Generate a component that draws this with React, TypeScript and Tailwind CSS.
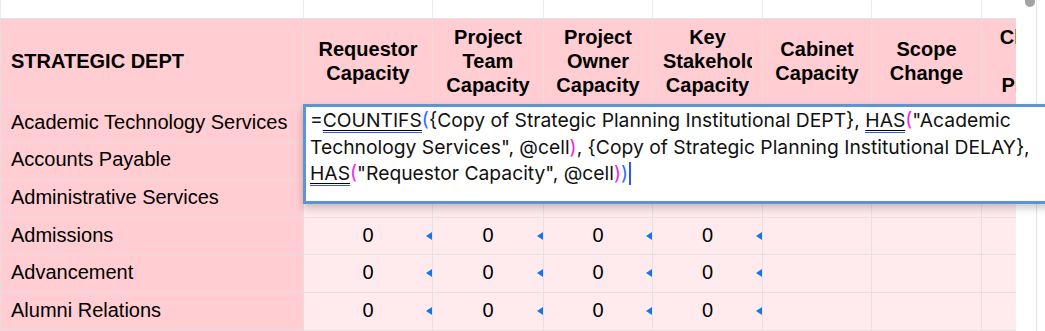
const cols = [304, 129, 111, 109, 110, 109, 110, 110];

const headers: string[][] = [
    ["Requestor", "Capacity"],
    ["Project", "Team", "Capacity"],
    ["Project", "Owner", "Capacity"],
    ["Key", "Stakeholder", "Capacity"],
    ["Cabinet", "Capacity"],
    ["Scope", "Change"],
    ["Change", "in", "Priority"],
];

// first three rows sit under the open formula editor
const depts = [
    { name: "Academic Technology Services", hidden: true },
    { name: "Accounts Payable", hidden: true },
    { name: "Administrative Services", hidden: true },
    { name: "Admissions", hidden: false },
    { name: "Advancement", hidden: false },
    { name: "Alumni Relations", hidden: false },
];

function Fn({ name }: { name: string }) {
    return <span className="underline decoration-black underline-offset-[3px] border-b-[1.5px] border-[#3557e6]">{name}</span>
}

const blue = "text-[#2f6bff]"
const pink = "text-[#f31ef0]"

export default function App() {
    return (
        <div className="relative w-[1045px] h-[331px] overflow-hidden bg-white flex font-['Liberation_Sans',Arial,sans-serif] text-black">
            <div className="w-[1016px] shrink-0 overflow-hidden">
                <div className="w-[1092px]">
                    {/* blank top row */}
                    <div className="flex h-[19px] border-b border-[#e2e2e2]">
                        {cols.map((w, i) => (
                            <div key={i} style={{ width: w }} className={`shrink-0 border-r border-[#ececec] ${i === 0 ? "border-l" : ""}`} />
                        ))}
                    </div>
                    {/* header */}
                    <div className="flex h-[86px] bg-[#ffcdd2] border-b border-[#eadada] font-bold text-[20px] leading-[24px]">
                        <div style={{ width: cols[0] }} className="shrink-0 flex items-center pl-[10px] pb-[2px] border-l border-r border-[#e8dcdc]">
                            STRATEGIC DEPT
                        </div>
                        {headers.map((lines, i) => (
                            <div key={i} style={{ width: cols[i + 1] }} className="shrink-0 border-r border-[#e8dcdc] flex items-center px-[10px] pb-[1px]">
                                <div className="w-full overflow-hidden text-center">
                                    {lines.map((l) => <div key={l} className="whitespace-nowrap">{l}</div>)}
                                </div>
                            </div>
                        ))}
                    </div>
                    {/* rows */}
                    {depts.map((d) => (
                        <div key={d.name} className="flex h-[37.6px] text-[20px]">
                            <div style={{ width: cols[0] }} className="shrink-0 flex items-center pl-[10px] pb-[3px] bg-[#ffcdd2] border-l border-r border-b border-[#e8dcdc] whitespace-nowrap">
                                {d.name}
                            </div>
                            {cols.slice(1).map((w, i) => (
                                <div key={i} style={{ width: w }} className="shrink-0 relative flex items-center justify-center pb-[3px] bg-[#ffebee] border-r border-b border-[#e6e2e2]">
                                    {i < 4 && !d.hidden && (
                                        <>
                                            <span>0</span>
                                            <span className="absolute right-0 top-[14px] w-0 h-0 border-y-[4.5px] border-y-transparent border-r-[6px] border-r-[#1a73e8]" />
                                        </>
                                    )}
                                </div>
                            ))}
                        </div>
                    ))}
                </div>
            </div>
            {/* scrollbar */}
            <div className="w-[21px] shrink-0 border-r border-[#e4e4e4]">
                <div className="mt-[-4px] ml-[9px] w-[10px] h-[11px] rounded-full bg-[#a3a3a3]" />
            </div>

            {/* formula editor */}
            <div className="absolute left-[303px] top-[104px] w-[760px] h-[100px] bg-white border-[3px] border-[#5b95d6] shadow-[0_4px_8px_rgba(0,0,0,0.22)] pl-[4px] font-['Inter',sans-serif] text-[19.3px] leading-[26.5px] text-[#111]">
                <div className="whitespace-nowrap">
                    =<Fn name="COUNTIFS" /><span className={blue}>(</span>{"{Copy of Strategic Planning Institutional DEPT}, "}<Fn name="HAS" /><span className={pink}>(</span>"Academic
                </div>
                <div className="whitespace-nowrap">
                    Technology Services", @cell<span className={pink}>)</span>{", {Copy of Strategic Planning Institutional DELAY},"}
                </div>
                <div className="whitespace-nowrap flex items-center">
                    <span><Fn name="HAS" /><span className={pink}>(</span>"Requestor Capacity", @cell<span className={pink}>)</span><span className={blue}>)</span></span>
                    <span className="inline-block w-[1.5px] h-[23px] bg-[#2f56e8] ml-[1px]" />
                </div>
            </div>
        </div>
    )
}
